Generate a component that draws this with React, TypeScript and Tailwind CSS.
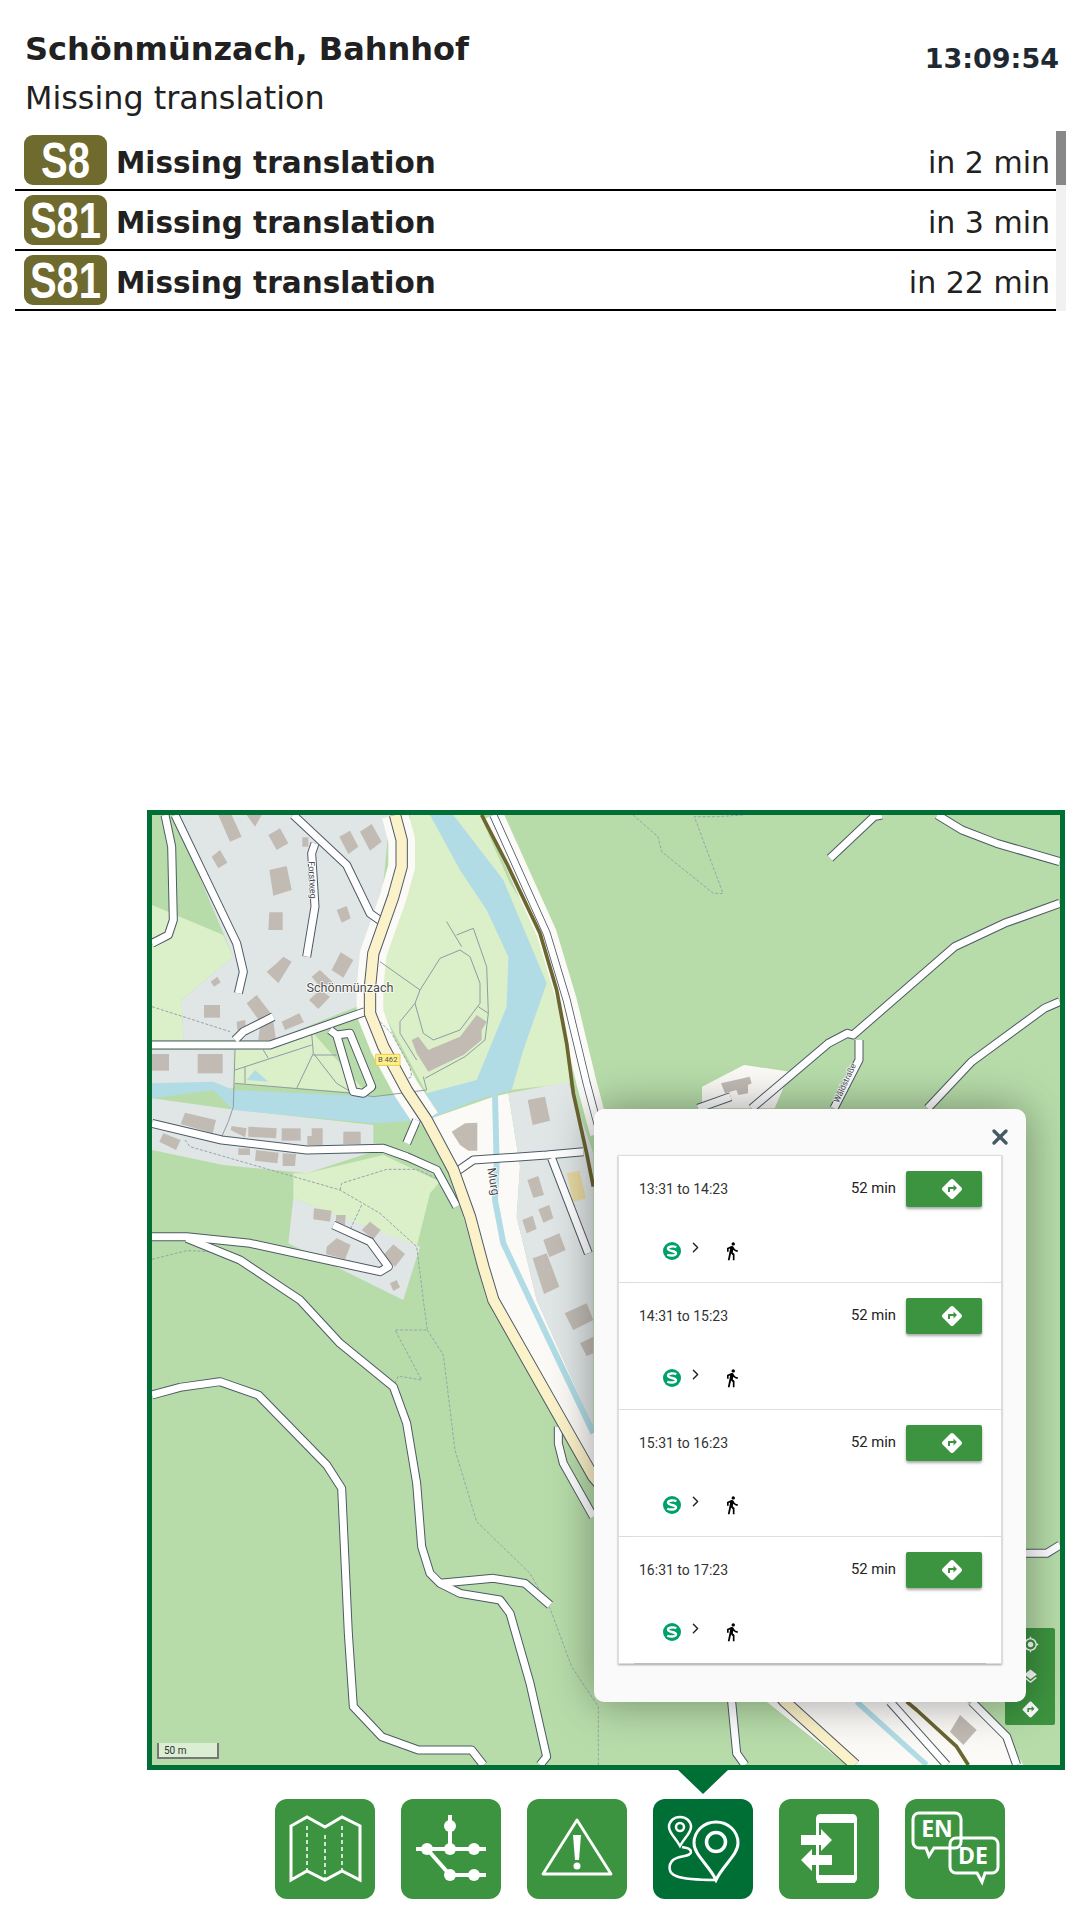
import React from "react";
import { MdDirections, MdDirectionsWalk, MdGpsFixed, MdLayers } from "react-icons/md";
import { ChevronRight, X } from "lucide-react";

const FOREST = "#b7dca9";
const MEADOW = "#dbefc8";
const RESIDENTIAL = "#e0e5e6";
const LAND = "#fcfaf7";
const WATER = "#b1dce6";
const BUILDING = "#c1bbb4";
const CASING = "#4d5a66";

const DEPARTURES = [
  { line: "S8", label: "Missing translation", due: "in 2 min" },
  { line: "S81", label: "Missing translation", due: "in 3 min" },
  { line: "S81", label: "Missing translation", due: "in 22 min" },
];

const TRIPS = ["13:31 to 14:23", "14:31 to 15:23", "15:31 to 16:23", "16:31 to 17:23"];

// map geometry, in 3x page units: x = (page x - 140) * 3, y = (page y - 800) * 3
const AREAS: [string, string][] = [
  [MEADOW, "36,315 250,405 280,470 125,600 130,720 36,720"],
  [RESIDENTIAL, "100,45 750,45 720,350 650,620 400,720 130,720 125,600 280,470"],
  [MEADOW, "810,45 1020,45 1110,250 1220,420 1280,700 1290,850 1110,870 860,880 720,620 720,460 800,260"],
  [MEADOW, "280,750 520,700 680,880 280,850"],
  [RESIDENTIAL, "36,750 280,750 280,865 220,870 36,850"],
  [RESIDENTIAL, "36,895 250,925 700,975 700,1030 730,1045 500,1120 250,1095 36,1050"],
  [MEADOW, "460,1120 500,1120 730,1065 900,1145 870,1180 830,1340 460,1195"],
  [RESIDENTIAL, "460,1195 840,1340 790,1500 445,1330"],
  [LAND, "970,1250 1040,1500 1360,2050 1880,2705 2120,2895 2650,2895 2600,2810 2480,2705 1360,1880 1190,1500 1130,1250 1140,1100 1105,880 1060,890 860,960 940,1110"],
  [RESIDENTIAL, "1105,880 1285,845 1360,1060 1360,1880 1190,1500 1130,1250 1140,1100"],
  [LAND, "1686,860 1812,795 1950,815 1904,925 1686,925"],
  [WATER, "870,45 940,45 1090,240 1220,550 1150,750 1115,870 1010,900 860,960 700,970 280,930 220,870 36,895 36,850 220,845 280,870 700,890 860,880 1010,840 1100,620 1105,470 1040,330 960,210"],
  [WATER, "320,840 345,810 385,845"],
];

const BUILDINGS = [
  "235,45 275,45 305,110 270,125",
  "320,45 365,45 345,80",
  "385,105 420,85 445,130 410,150",
  "215,170 240,150 262,188 235,205",
  "388,210 440,198 455,270 400,287",
  "487,112 505,112 505,140 487,140",
  "598,110 630,92 655,140 625,162",
  "660,95 695,72 725,125 690,152",
  "590,330 620,318 632,355 605,368",
  "388,337 428,337 428,390 385,390",
  "380,515 410,490 430,470 455,485 415,550",
  "602,457 640,480 610,533 575,510",
  "212,545 232,530 242,547 222,560",
  "515,530 540,510 580,548 540,560",
  "507,600 540,570 570,590 535,627",
  "320,610 350,585 392,640 360,665",
  "192,615 240,615 240,653 192,653",
  "290,665 315,660 320,695 292,690",
  "425,665 478,640 492,667 435,690",
  "360,680 400,665 408,720 355,720",
  "36,762 87,762 87,812 36,812",
  "173,762 248,762 248,820 173,820",
  "122,972 135,938 228,960 218,1000",
  "272,990 275,978 320,985 315,1012",
  "325,980 410,985 408,1015 325,1010",
  "425,985 482,985 482,1022 425,1022",
  "515,985 548,985 548,1035 502,1035 502,1008 515,1008",
  "610,995 662,995 662,1032 610,1032",
  "58,1025 70,1000 122,1020 108,1050",
  "295,1045 330,1045 330,1065 295,1065",
  "348,1050 416,1058 412,1090 345,1082",
  "428,1060 468,1062 465,1098 428,1098",
  "522,1225 575,1232 570,1265 520,1258",
  "588,1245 617,1245 615,1275 588,1270",
  "665,1290 690,1265 722,1290 700,1318",
  "560,1340 590,1315 632,1335 615,1378 558,1362",
  "730,1365 760,1333 795,1362 765,1400",
  "750,1450 770,1440 780,1462 760,1473",
  "815,720 835,710 865,750 960,710 1010,645 1040,665 1025,690 1025,720 970,765 865,815 830,760",
  "935,995 975,970 1012,968 1012,1052 985,1052 960,1035",
  "1163,900 1215,890 1230,962 1178,975",
  "1162,1140 1195,1128 1212,1185 1180,1193",
  "1195,1228 1228,1215 1240,1255 1210,1268",
  "1147,1260 1178,1247 1190,1287 1160,1300",
  "1210,1320 1258,1300 1277,1350 1228,1372",
  "1178,1375 1220,1360 1258,1460 1212,1482",
  "1274,1540 1340,1510 1360,1560 1300,1590",
  "1320,1630 1360,1610 1360,1660 1340,1668",
  "1743,850 1829,830 1835,850 1824,855 1824,880 1795,885 1789,870 1755,880",
  "2460,2745 2510,2790 2470,2835 2430,2795",
];

const FOOTWAYS = [
  "720,485 840,570",
  "840,570 900,475 960,450 990,470 1020,550 1020,610 960,690 880,720 850,700 825,610 840,570",
  "920,365 965,440",
  "950,405 1000,385 1040,500 1045,640 1035,720 975,770 855,835",
  "825,610 780,665 780,700 830,780",
  "1015,620 1045,640",
  "515,700 520,760 470,865",
  "520,760 590,850 640,880",
  "285,810 515,735",
  "285,750 280,920 265,965 245,1010",
  "285,850 640,880 700,890 860,870 850,830",
  "370,750 385,775",
  "520,765 590,765",
  "315,800 315,850",
];

const TRAILS = [
  "36,620 270,695",
  "135,1020 150,1040 600,1170 720,1240 830,1340 850,1500 862,1590 765,1590 845,1740 775,1728 760,1760",
  "862,1590 910,1665 945,1950 1010,2165 1170,2320 1230,2425 1295,2600 1375,2720 1375,2895",
  "600,1170 605,1150 740,1108 830,1108 900,1140",
  "665,1215 630,1290",
  "720,665 755,700 810,800 815,830 795,840",
  "36,1378 140,1352 215,1355",
  "1479,45 1554,110 1565,155 1720,280 1749,280 1663,50 1732,50 1812,45",
];

const ROADS = [
  "75,45 95,140 100,360 85,405 36,430",
  "105,45 290,430 310,515 295,580",
  "460,45 620,195 690,340 725,365",
  "525,130 515,160 525,320 500,470",
  "36,735 390,735 675,635",
  "285,720 310,695 400,650",
  "570,690 590,705 630,700 695,860 670,880 640,875 590,705",
  "36,970 245,1020 500,1050 730,1045 800,1070 890,1110 950,1220",
  "800,1030 830,960",
  "950,1115 1000,1080 1220,1065 1330,1055",
  "1235,1075 1345,1360",
  "36,1310 140,1310 330,1330 720,1415 745,1400 690,1325 580,1275",
  "140,1315 300,1380 480,1500 600,1630 760,1760 800,1870 830,2050 845,2240 870,2320 900,2350 960,2380 1080,2400 1110,2440 1170,2650 1220,2870 1200,2895",
  "900,2350 1060,2335 1155,2350 1230,2415",
  "36,1785 120,1762 240,1745 355,1785 560,1995 605,2065 625,2500 640,2720 725,2810 835,2850 995,2850 1030,2895",
  "1255,1880 1255,1930 1270,1990 1360,2150",
  "2070,175 2202,50 2225,45",
  "2392,45 2466,90 2570,130 2759,185",
  "2759,310 2593,370 2444,440 2139,705 2122,700 2065,730 1835,925",
  "2157,720 2157,780 2082,925",
  "2759,605 2713,625 2495,785 2363,925",
  "1772,890 1674,925",
  "1775,2705 1790,2860 1815,2895",
  "2250,2705 2420,2895",
  "2495,2705 2600,2810 2630,2895",
  "2655,2260 2720,2260 2760,2235",
];

const PRIMARY_NORTH = "765,45 785,120 785,200 760,290 700,460 690,560 690,640 730,740 800,870 860,960";
const PRIMARY = `${PRIMARY_NORTH} 940,1110 990,1250 1030,1400 1060,1500 1360,2030 1935,2705 2145,2895`;
const RAIL = "1025,45 1100,190 1200,400 1250,570 1280,730 1300,880 1340,1060 1360,1160";
const RAIL_SOUTH = "2300,2705 2330,2730 2450,2840 2485,2895";
const BESIDE_RAIL = "1060,45 1220,400 1280,600 1340,850 1380,1000";

function MapLabel({ x, y, size = 36, rotate = 0, children }: { x: number; y: number; size?: number; rotate?: number; children: string }) {
  return (
    <text
      x={x}
      y={y}
      fontSize={size}
      textAnchor="middle"
      dominantBaseline="middle"
      fontFamily="Roboto, sans-serif"
      fill="#4a4a4a"
      stroke="#ffffff"
      strokeWidth={5}
      paintOrder="stroke"
      transform={rotate ? `rotate(${rotate} ${x} ${y})` : undefined}
    >
      {children}
    </text>
  );
}

function MapDrawing() {
  return (
    <svg className="block w-[908px] h-[950px]" viewBox="36 45 2724 2850" fill="none" strokeLinejoin="round">
      <rect x="36" y="45" width="2724" height="2850" fill={FOREST} />
      {AREAS.map(([color, points], i) => (
        <polygon key={i} points={points} fill={color} />
      ))}
      <polyline points={PRIMARY_NORTH} stroke={LAND} strokeWidth={80} />
      <polyline points={BESIDE_RAIL} stroke={LAND} strokeWidth={60} />
      <polyline points="1065,885 1070,1090 1065,1200 1090,1330 1170,1500 1360,1900" stroke={WATER} strokeWidth={18} />
      <polyline points="2150,2705 2360,2895" stroke={WATER} strokeWidth={16} />
      {BUILDINGS.map((points, i) => (
        <polygon key={i} points={points} fill={BUILDING} />
      ))}
      <polygon points="1280,1120 1318,1112 1338,1195 1300,1205" fill="#e8d9a0" />
      {FOOTWAYS.map((points, i) => (
        <polyline key={i} points={points} stroke="#8f9ca3" strokeWidth={3} />
      ))}
      {TRAILS.map((points, i) => (
        <polyline key={i} points={points} stroke="#9aa3ae" strokeWidth={3} strokeDasharray="9 5" />
      ))}
      {ROADS.map((points, i) => (
        <polyline key={i} points={points} stroke={CASING} strokeWidth={27} />
      ))}
      {ROADS.map((points, i) => (
        <polyline key={i} points={points} stroke="#ffffff" strokeWidth={21} />
      ))}
      <polyline points={BESIDE_RAIL} stroke={CASING} strokeWidth={24} />
      <polyline points={BESIDE_RAIL} stroke="#ffffff" strokeWidth={19} />
      <polyline points={PRIMARY} stroke={CASING} strokeWidth={37} />
      <polyline points={PRIMARY} stroke="#fcf2c9" strokeWidth={31} />
      <polyline points={RAIL} stroke="#6b6530" strokeWidth={11} />
      <polyline points={RAIL_SOUTH} stroke="#6b6530" strokeWidth={11} />
      <MapLabel x={630} y={567} size={38}>Schönmünzach</MapLabel>
      <MapLabel x={515} y={240} size={27} rotate={87}>Forstweg</MapLabel>
      <MapLabel x={1058} y={1145} size={36} rotate={80}>Murg</MapLabel>
      <MapLabel x={2116} y={850} size={25} rotate={-65}>Waldstraße</MapLabel>
      <rect x="707" y="763" width="73" height="33" fill="#fdf08a" stroke="#eccb4e" strokeWidth={3} />
      <text x={743} y={781} fontSize={23} textAnchor="middle" dominantBaseline="middle" fontFamily="Roboto, sans-serif" fill="#555">
        B 462
      </text>
    </svg>
  );
}

function SBahnLogo() {
  return (
    <svg className="block w-[18px] h-[18px]" viewBox="0 0 17 17" fill="none">
      <circle cx="8.5" cy="8.5" r="8.5" fill="#00a06a" />
      <path d="M12.6 4.9c-2.2-1.1-8-1.2-7.9 1.5.1 2.6 7.6 1.6 7.6 4.3 0 2.6-5.700 2.400-8.300 1.300" stroke="#ffffff" strokeWidth="2.200" />
    </svg>
  );
}

function TripRow({ time, last }: { time: string; last: boolean }) {
  return (
    <div className="h-[127px] border-b border-[#dcdcdc] bg-white">
      <div className="flex items-start pt-[15px] pl-[20px] pr-[19px]">
        <span className="flex-1 text-[14px] leading-[36px] text-[#333333]">{time}</span>
        <span className="text-[14.800px] leading-[34px] text-[#222222]">52 min</span>
        <button className="ml-[10px] flex h-[36px] w-[76px] items-center rounded-[2px] bg-[#3d9440] pl-[34px] text-white shadow-[0_2px_3px_rgba(0,0,0,0.35)]">
          <MdDirections size={24} />
        </button>
      </div>
      <div className="mt-[35px] flex h-[18px] items-center pl-[44px]">
        <SBahnLogo />
        <ChevronRight size={17} strokeWidth={2} className="ml-[6px] -mt-[7px] text-[#222222]" />
        <MdDirectionsWalk size={20} className="ml-[18px] text-black" />
      </div>
      <div className={`mx-[15px] mt-[22px] h-[2px] ${last ? "bg-[#bdbdbd]" : "bg-[#dfdfdf]"}`} />
    </div>
  );
}

function MapIcon() {
  return (
    <svg viewBox="0 0 100 100" className="h-full w-full" fill="none" stroke="#ffffff" strokeWidth="3">
      <polygon points="16,27 32,18 50,28 67,18 85,27 85,81 67,72 50,81 32,72 16,81" />
      <path d="M32 27v45M50 36v45M67 27v45" strokeWidth="1.500" strokeDasharray="4 3" />
    </svg>
  );
}

function NetworkIcon() {
  return (
    <svg viewBox="0 0 100 100" className="h-full w-full" fill="#ffffff" stroke="#ffffff">
      <path d="M49 16v34M15 50h70M26 50l23 26h36" fill="none" strokeWidth="4" />
      {[
        [49, 27],
        [26, 50],
        [49, 50],
        [73, 50],
        [49, 76],
        [73, 76],
      ].map(([cx, cy]) => (
        <circle key={`${cx}-${cy}`} cx={cx} cy={cy} r="6" stroke="none" />
      ))}
    </svg>
  );
}

function WarningIcon() {
  return (
    <svg viewBox="0 0 100 100" className="h-full w-full" fill="none" stroke="#ffffff" strokeWidth="2.800" strokeLinejoin="round">
      <polygon points="50,21 84,75 16,75" />
      <polygon points="46,36 54,36 52,61 48,61" fill="#ffffff" stroke="none" />
      <circle cx="50" cy="67" r="3.500" fill="#ffffff" stroke="none" />
    </svg>
  );
}

function PinsIcon() {
  return (
    <svg viewBox="0 0 100 100" className="h-full w-full" fill="none" stroke="#ffffff" strokeWidth="2.500">
      <path d="M27 47C22 38 16 34 16 28c0-6 5-10 11-10s11 4 11 10c0 6-6 10-11 19z" />
      <circle cx="27" cy="28" r="4" />
      <path d="M63 81C56 66 41 56 41 44c0-12 10-21 22-21s22 9 22 21c0 12-15 22-22 37z" strokeWidth="3" />
      <circle cx="63" cy="43" r="9.500" strokeWidth="3.500" />
      <path d="M29 48c4 1 9 1 9 5 0 5-12 3-18 8-5 5-5 13 3 16 10 4 28 4 40 4" />
    </svg>
  );
}

function PhoneIcon() {
  return (
    <svg viewBox="0 0 100 100" className="h-full w-full" fill="#ffffff">
      <rect x="38.500" y="16.500" width="38" height="66" rx="3" fill="none" stroke="#ffffff" strokeWidth="3" />
      <path d="M38 16h38v8H38zM38 76h38v8H38z" />
      <path d="M22 36h20v-6l11 11-11 11v-6H22z" />
      <path d="M53 56H33v-6L22 61l11 11v-6h20z" />
    </svg>
  );
}

function LanguageIcon() {
  return (
    <svg viewBox="0 0 100 100" className="h-full w-full" fill="none" stroke="#ffffff" strokeWidth="3">
      <path d="M14 14h36a6 6 0 0 1 6 6v23a6 6 0 0 1-6 6H29l-5 8-3-8h-7a6 6 0 0 1-6-6V20a6 6 0 0 1 6-6z" />
      <path d="M51 39h36a6 6 0 0 1 6 6v23a6 6 0 0 1-6 6h-7l-3 9-5-9H51a6 6 0 0 1-6-6V45a6 6 0 0 1 6-6z" />
      <text x="32" y="38" textAnchor="middle" fontSize="23" fontWeight="700" fontFamily="'Open Sans', sans-serif" fill="#ffffff" stroke="none">EN</text>
      <text x="68" y="65" textAnchor="middle" fontSize="23" fontWeight="700" fontFamily="'Open Sans', sans-serif" fill="#ffffff" stroke="none">DE</text>
    </svg>
  );
}

const NAV_ITEMS = [
  { key: "map", icon: <MapIcon /> },
  { key: "network", icon: <NetworkIcon /> },
  { key: "alerts", icon: <WarningIcon /> },
  { key: "route", icon: <PinsIcon />, active: true },
  { key: "phone", icon: <PhoneIcon /> },
  { key: "language", icon: <LanguageIcon /> },
];

export default function App() {
  return (
    <div className="h-[1920px] w-[1080px] overflow-hidden bg-white font-['DejaVu_Sans',sans-serif] text-[#212121]">
      <header className="flex h-[131px] justify-between pl-[25px] pr-[21px] pt-[25px]">
        <div>
          <h1 className="text-[32px] font-bold leading-[48px]">Schönmünzach, Bahnhof</h1>
          <p className="mt-[1px] text-[31.800px] leading-[48px]">Missing translation</p>
        </div>
        <div className="mt-[18px] text-[27px] font-bold leading-[32px] text-[#1f2933]">13:09:54</div>
      </header>

      <section className="ml-[15px] flex h-[180px] w-[1051px]">
        <div className="w-[1041px]">
          {DEPARTURES.map((row, i) => (
            <div key={i} className="flex h-[60px] items-start border-b-2 border-black pl-[9px] pr-[6px] pt-[4px]">
              <span className="flex h-[50px] w-[83px] items-center justify-center rounded-[9px] bg-[#6f6a2e] pt-[2px] font-['Liberation_Sans',sans-serif] text-[50px] font-bold text-white">
                <span className="inline-block shrink-0 scale-x-[0.8]">{row.line}</span>
              </span>
              <span className="ml-[9px] flex-1 pt-[3px] text-[29.500px] font-bold leading-[50px]">{row.label}</span>
              <span className="pt-[3px] text-[30px] leading-[50px]">{row.due}</span>
            </div>
          ))}
        </div>
        <div className="w-[10px] bg-[#f1f1f1]">
          <div className="h-[54px] bg-[#888888]" />
        </div>
      </section>

      <section className="relative ml-[147px] mt-[499px] h-[960px] w-[918px] overflow-hidden border-[5px] border-[#006f36] font-['Roboto',sans-serif]">
        <MapDrawing />

        <div className="absolute bottom-[6px] left-[5px] flex h-[16px] w-[62px] items-center border-2 border-t-0 border-[#777777] bg-white/50 pl-[5px] text-[10px] text-[#333333]">
          50 m
        </div>

        <div className="absolute right-[5px] top-[813px] w-[50px] overflow-hidden rounded-[2px] bg-[#3d9440] text-white">
          <div className="flex h-[32px] items-center justify-center"><MdGpsFixed size={17} /></div>
          <div className="flex h-[33px] items-center justify-center"><MdLayers size={17} /></div>
          <div className="flex h-[32px] items-center justify-center"><MdDirections size={19} /></div>
        </div>

        <div className="absolute left-[442px] top-[294px] h-[593px] w-[432px] rounded-[10px] bg-[#fafafa] px-[24px] pt-[46px] shadow-[0_0_45px_rgba(0,0,0,0.38)]">
          <X size={24} strokeWidth={3.400} className="absolute right-[14px] top-[16px] text-[#455a64]" />
          <div className="border-x border-t border-[#dcdcdc] shadow-[0_1px_2px_rgba(0,0,0,0.35)]">
            {TRIPS.map((time, i) => (
              <TripRow key={time} time={time} last={i === TRIPS.length - 1} />
            ))}
          </div>
        </div>
      </section>

      <nav className="ml-[275px] mt-[29px] flex gap-[26px]">
        {NAV_ITEMS.map((item) => (
          <div key={item.key} className={`relative h-[100px] w-[100px] rounded-[12px] ${item.active ? "bg-[#006f36]" : "bg-[#3d9440]"}`}>
            {item.active && (
              <div className="absolute -top-[29px] left-[25px] h-[24px] w-[50px] bg-[#006f36] [clip-path:polygon(0_0,100%_0,50%_100%)]" />
            )}
            {item.icon}
          </div>
        ))}
      </nav>
    </div>
  );
}
